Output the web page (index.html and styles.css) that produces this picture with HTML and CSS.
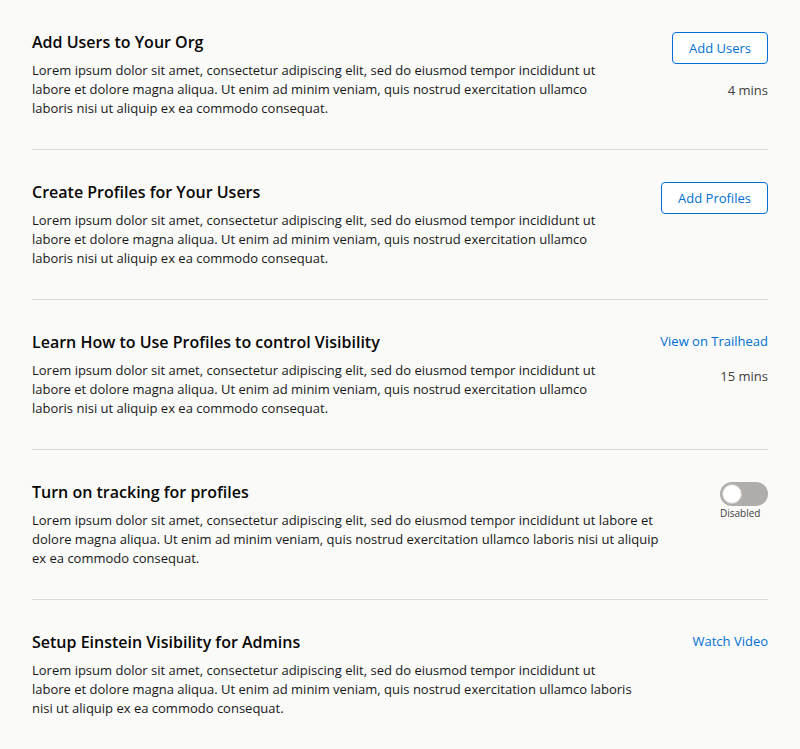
FILE: index.html
```html
<!DOCTYPE html>
<html lang="en">
<head>
<meta charset="utf-8">
<title>Setup Steps</title>
<link rel="stylesheet" href="styles.css">
</head>
<body>
<main class="steps">
  <section class="step">
    <div class="step-main">
      <h2 class="step-title">Add Users to Your Org</h2>
      <p class="step-desc">Lorem ipsum dolor sit amet, consectetur adipiscing elit, sed do eiusmod tempor incididunt ut labore et dolore magna aliqua. Ut enim ad minim veniam, quis nostrud exercitation ullamco laboris nisi ut aliquip ex ea commodo consequat.</p>
    </div>
    <div class="step-side">
      <button class="btn" type="button">Add Users</button>
      <span class="duration">4 mins</span>
    </div>
  </section>
  <section class="step">
    <div class="step-main">
      <h2 class="step-title">Create Profiles for Your Users</h2>
      <p class="step-desc">Lorem ipsum dolor sit amet, consectetur adipiscing elit, sed do eiusmod tempor incididunt ut labore et dolore magna aliqua. Ut enim ad minim veniam, quis nostrud exercitation ullamco laboris nisi ut aliquip ex ea commodo consequat.</p>
    </div>
    <div class="step-side">
      <button class="btn" type="button">Add Profiles</button>
    </div>
  </section>
  <section class="step">
    <div class="step-main">
      <h2 class="step-title">Learn How to Use Profiles to control Visibility</h2>
      <p class="step-desc">Lorem ipsum dolor sit amet, consectetur adipiscing elit, sed do eiusmod tempor incididunt ut labore et dolore magna aliqua. Ut enim ad minim veniam, quis nostrud exercitation ullamco laboris nisi ut aliquip ex ea commodo consequat.</p>
    </div>
    <div class="step-side">
      <a class="link" href="#">View on Trailhead</a>
      <span class="duration">15 mins</span>
    </div>
  </section>
  <section class="step">
    <div class="step-main">
      <h2 class="step-title">Turn on tracking for profiles</h2>
      <p class="step-desc step-desc--wide">Lorem ipsum dolor sit amet, consectetur adipiscing elit, sed do eiusmod tempor incididunt ut labore et dolore magna aliqua. Ut enim ad minim veniam, quis nostrud exercitation ullamco laboris nisi ut aliquip ex ea commodo consequat.</p>
    </div>
    <div class="step-side">
      <label class="toggle">
        <span class="toggle-track"><span class="toggle-knob"></span></span>
        <span class="toggle-label">Disabled</span>
      </label>
    </div>
  </section>
  <section class="step">
    <div class="step-main">
      <h2 class="step-title">Setup Einstein Visibility for Admins</h2>
      <p class="step-desc step-desc--mid">Lorem ipsum dolor sit amet, consectetur adipiscing elit, sed do eiusmod tempor incididunt ut labore et dolore magna aliqua. Ut enim ad minim veniam, quis nostrud exercitation ullamco laboris nisi ut aliquip ex ea commodo consequat.</p>
    </div>
    <div class="step-side">
      <a class="link" href="#">Watch Video</a>
    </div>
  </section>
</main>
</body>
</html>
```
FILE: styles.css
```css
html, body {
  margin: 0;
  padding: 0;
  background: #fafaf9;
}
body {
  font-family: "Open Sans", Lato, sans-serif;
  color: #181818;
  -webkit-font-smoothing: antialiased;
}
.steps {
  padding: 0 32px;
}
.step {
  display: flex;
  justify-content: space-between;
  align-items: flex-start;
  padding: 32px 0 31px;
  border-bottom: 1px solid #dddbda;
}
.step:last-child {
  border-bottom: none;
}
.step-main {
  flex: 1 1 auto;
}
.step-title {
  margin: 0 0 9px;
  font-size: 16px;
  line-height: 20px;
  font-weight: 600;
  color: #080707;
}
.step-desc {
  margin: 0;
  font-size: 13px;
  line-height: 19px;
  max-width: 570px;
}
.step-desc--wide {
  max-width: 628px;
}
.step-desc--mid {
  max-width: 605px;
}
.step-side {
  display: flex;
  flex-direction: column;
  align-items: flex-end;
  gap: 16px;
  flex: none;
}
.btn {
  font-family: inherit;
  font-size: 13px;
  line-height: 30px;
  height: 32px;
  padding: 0 16px;
  border: 1px solid #0070d2;
  border-radius: 4px;
  background: #ffffff;
  color: #0070d2;
  cursor: pointer;
}
.duration {
  font-size: 13px;
  line-height: 20px;
  color: #3e3e3c;
}
.link {
  font-size: 13px;
  line-height: 18px;
  color: #0070d2;
  text-decoration: none;
}
.toggle {
  display: flex;
  flex-direction: column;
  align-items: flex-start;
  gap: 1px;
}
.toggle-track {
  display: flex;
  align-items: center;
  width: 48px;
  height: 24px;
  padding: 2px;
  box-sizing: border-box;
  border-radius: 12px;
  background: #b0adab;
}
.toggle-knob {
  width: 20px;
  height: 20px;
  box-sizing: border-box;
  border-radius: 50%;
  background: #ffffff;
  border: 1px solid #c9c7c5;
}
.toggle-label {
  font-size: 10px;
  line-height: 12px;
  color: #3e3e3c;
}
```
